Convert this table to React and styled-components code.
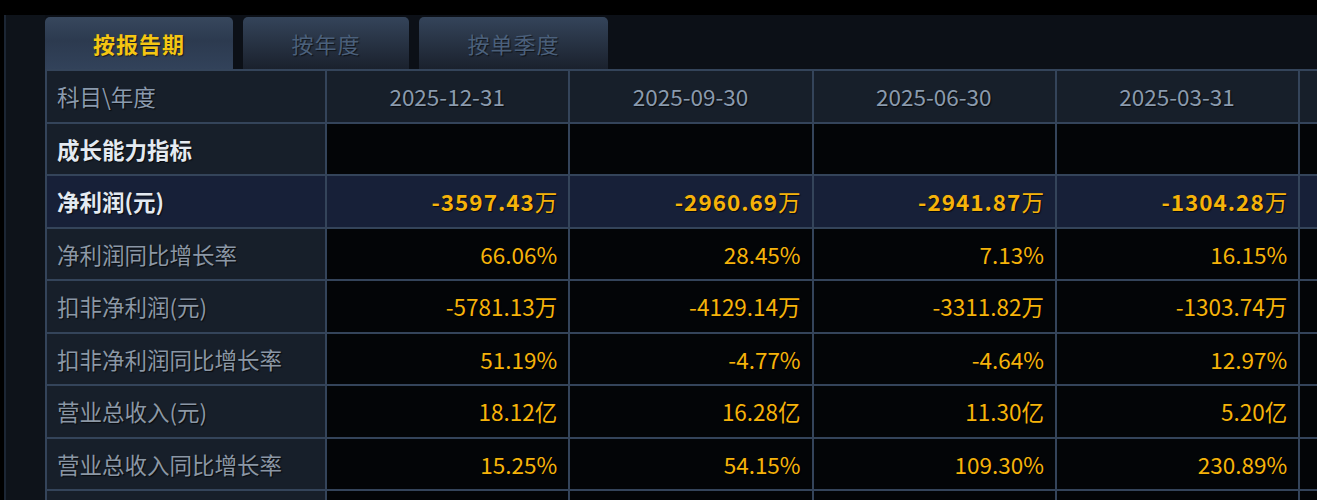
import styled, { createGlobalStyle } from "styled-components";

const GlobalStyle = createGlobalStyle`
  html, body {
    margin: 0;
    padding: 0;
    background: #000;
    overflow: hidden;
  }
  body {
    font-family: "Noto Sans CJK SC", "Noto Sans", sans-serif;
  }
`;

const Page = styled.div`
  width: 1317px;
  height: 500px;
  overflow: hidden;
  background: #000;
  padding-top: 15px;
  box-sizing: border-box;
`;

const Frame = styled.div`
  display: flex;
  height: 100%;
  padding-left: 4px;
  background: #000;
`;

const EdgeLine = styled.div`
  width: 2px;
  flex-shrink: 0;
  background: #1c2634;
`;

const Side = styled.div`
  width: 39px;
  flex-shrink: 0;
  background: #0e131a;
`;

const Content = styled.div`
  flex: 1;
  min-width: 0;
  overflow: hidden;
  background: #0c1017;
`;

const Tabs = styled.div`
  display: flex;
  gap: 10px;
  padding-top: 2px;
  height: 52px;
`;

const Tab = styled.div`
  width: ${p => p.$w}px;
  height: 52px;
  box-sizing: border-box;
  display: flex;
  align-items: center;
  justify-content: center;
  border-radius: 5px 5px 0 0;
  font-size: 22px;
  letter-spacing: 1px;
  font-weight: ${p => (p.$active ? 700 : 400)};
  color: ${p => (p.$active ? "#f4c613" : "#4b607b")};
  background: ${p =>
    p.$active
      ? "linear-gradient(#37475d, #2c3a4f 45%, #32425a)"
      : "linear-gradient(#34445a, #1a212d)"};
  text-shadow: 1px 1px 1px rgba(0, 0, 0, 0.6);
`;

const Grid = styled.div`
  display: grid;
  grid-template-columns: 278px repeat(5, 241.3px);
  grid-auto-rows: 50.5px;
  gap: 2px;
  padding: 2px 0 0 2px;
  width: max-content;
  background: #34445a;
`;

const Cell = styled.div`
  display: flex;
  align-items: center;
  padding: 0 11px 0 10px;
  font-size: 22.5px;
  white-space: nowrap;
  overflow: hidden;
  text-shadow: 1px 1px 1px rgba(0, 0, 0, 0.7);
  background: ${p => (p.$hl ? "#172038" : p.$label || p.$head ? "#171f2a" : "#030507")};
`;

const HeadCell = styled(Cell)`
  justify-content: ${p => (p.$label ? "flex-start" : "center")};
  color: #8a9aad;
`;

const LabelCell = styled(Cell)`
  color: ${p => (p.$strong ? "#e4eaf1" : "#8b97a5")};
  font-weight: ${p => (p.$strong ? 600 : 400)};
`;

const ValueCell = styled(Cell)`
  justify-content: flex-end;
  color: #f6b30a;
  font-weight: ${p => (p.$bold ? 700 : 400)};
  letter-spacing: ${p => (p.$bold ? "1px" : "0")};
`;

const Unit = styled.span`
  font-weight: 400;
  letter-spacing: 0;
`;

const dates = ["2025-12-31", "2025-09-30", "2025-06-30", "2025-03-31", ""];

const rows = [
  { label: "成长能力指标", strong: true, values: ["", "", "", "", ""] },
  { label: "净利润(元)", strong: true, hl: true, values: ["-3597.43万", "-2960.69万", "-2941.87万", "-1304.28万", ""] },
  { label: "净利润同比增长率", values: ["66.06%", "28.45%", "7.13%", "16.15%", ""] },
  { label: "扣非净利润(元)", values: ["-5781.13万", "-4129.14万", "-3311.82万", "-1303.74万", ""] },
  { label: "扣非净利润同比增长率", values: ["51.19%", "-4.77%", "-4.64%", "12.97%", ""] },
  { label: "营业总收入(元)", values: ["18.12亿", "16.28亿", "11.30亿", "5.20亿", ""] },
  { label: "营业总收入同比增长率", values: ["15.25%", "54.15%", "109.30%", "230.89%", ""] },
  { label: "", values: ["", "", "", "", ""] },
];

const Value = ({ text, bold }) => {
  const m = text.match(/^(.*?)([万亿])$/);
  if (bold && m) {
    return (
      <>
        {m[1]}
        <Unit>{m[2]}</Unit>
      </>
    );
  }
  return text;
};

const Row = ({ row }) => (
  <>
    <LabelCell $label $hl={row.hl} $strong={row.strong}>{row.label}</LabelCell>
    {row.values.map((v, i) => (
      <ValueCell key={i} $hl={row.hl} $bold={row.hl}>
        <Value text={v} bold={row.hl} />
      </ValueCell>
    ))}
  </>
);

const App = () => {
  return (
    <>
      <GlobalStyle />
      <Page>
        <Frame>
          <EdgeLine />
          <Side />
          <Content>
            <Tabs>
              <Tab $w={188} $active>按报告期</Tab>
              <Tab $w={166}>按年度</Tab>
              <Tab $w={189}>按单季度</Tab>
            </Tabs>
            <Grid>
              <HeadCell $head $label>科目\年度</HeadCell>
              {dates.map((d, i) => (
                <HeadCell $head key={i}>{d}</HeadCell>
              ))}
              {rows.map((r, i) => (
                <Row key={i} row={r} />
              ))}
            </Grid>
          </Content>
        </Frame>
      </Page>
    </>
  );
};

export default App;
